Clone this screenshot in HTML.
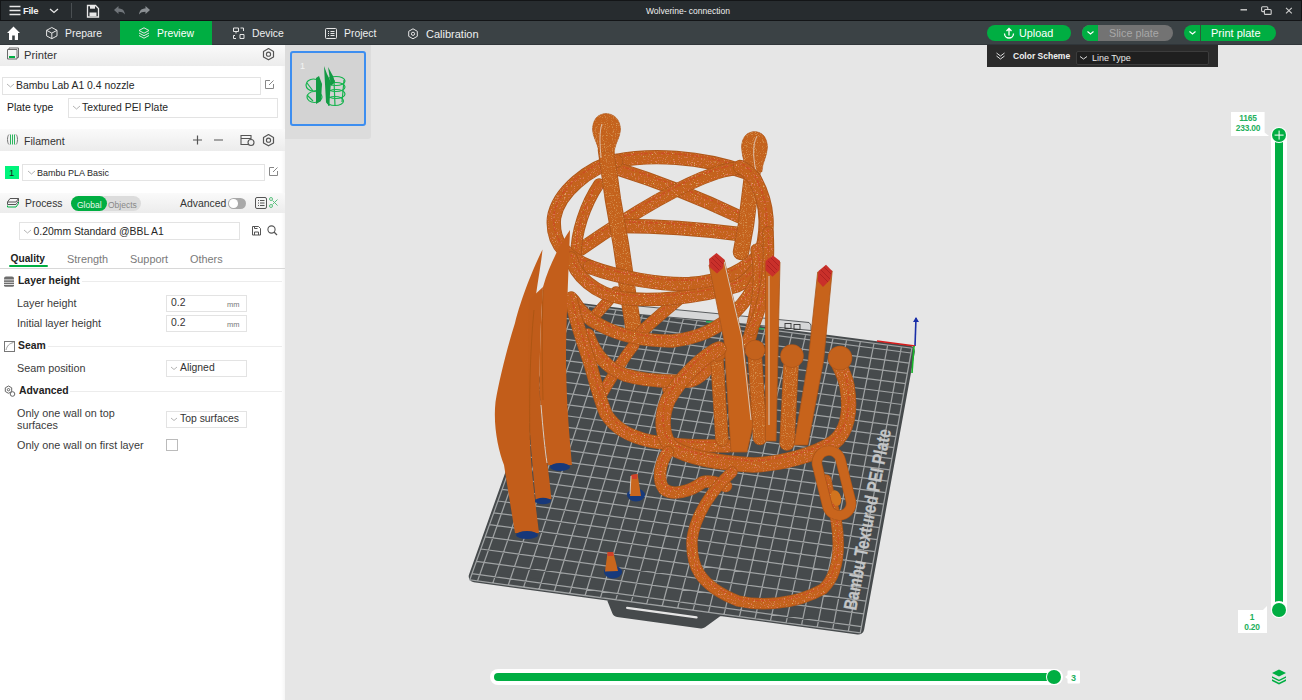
<!DOCTYPE html>
<html><head><meta charset="utf-8">
<style>
*{margin:0;padding:0;box-sizing:border-box}
html,body{width:1302px;height:700px;overflow:hidden;background:#e6e6e6;font-family:"Liberation Sans",sans-serif;position:relative}
.a{position:absolute}
.t{position:absolute;white-space:nowrap;line-height:12px}
#title{left:0;top:0;width:1302px;height:21px;background:#272c2f;border-top:1px solid #131517;border-bottom:1px solid #131517;border-left:1px solid #131517}
#tabs{left:0;top:21px;width:1302px;height:24px;background:#3b4245;border-bottom:1px solid #30363a}
#left{left:0;top:45px;width:285px;height:655px;background:#fff}
.hdr{position:absolute;left:0;width:285px;background:linear-gradient(#fafafa,#ececec)}
.box{position:absolute;border:1px solid #e3e3e3;background:#fff}
.l{position:absolute;white-space:nowrap;font-size:10.4px;color:#262626;line-height:14px}
.tab{font-size:10.4px;color:#eef0f0}
svg{position:absolute;overflow:visible}
</style></head><body>
<svg id="scene" style="left:0;top:0" width="1302" height="700">
<defs><filter id="spk" filterUnits="userSpaceOnUse" x="0" y="0" width="1302" height="700"><feTurbulence type="fractalNoise" baseFrequency="0.7" numOctaves="1" seed="4" result="t"/><feColorMatrix in="t" type="matrix" values="0 0 0 0 0.80  0 0 0 0 0.20  0 0 0 0 0.12  0 0 0 6 -3.6" result="r"/><feTurbulence type="fractalNoise" baseFrequency="0.9" numOctaves="1" seed="9" result="t2"/><feColorMatrix in="t2" type="matrix" values="0 0 0 0 0.78  0 0 0 0 0.62  0 0 0 0 0.22  0 0 0 5 -3.3" result="y"/><feMerge result="m"><feMergeNode in="SourceGraphic"/><feMergeNode in="r"/><feMergeNode in="y"/></feMerge><feComposite in="m" in2="SourceAlpha" operator="in"/></filter><filter id="tex" filterUnits="userSpaceOnUse" x="0" y="0" width="1302" height="700"><feTurbulence type="fractalNoise" baseFrequency="0.9" numOctaves="1" seed="2" result="t"/><feColorMatrix in="t" type="matrix" values="0 0 0 0 0.70  0 0 0 0 0.33  0 0 0 0 0.09  0 0 0 4 -2.2" result="r"/><feMerge result="m"><feMergeNode in="SourceGraphic"/><feMergeNode in="r"/></feMerge><feComposite in="m" in2="SourceAlpha" operator="in"/></filter></defs>
<polygon points="570.4,307.6 908.8,351.4 858.2,628.6 719.0,609.7 701.5,622.5 617.9,611.1 611.5,595.0 474.7,576.4" fill="#464a4c" stroke="#464a4c" stroke-width="12" stroke-linejoin="round"/>
<path d="M575.5,304.6L477.6,580.8 M588.9,306.4L492.9,582.9 M602.4,308.1L508.3,585.0 M615.9,309.9L523.6,587.1 M629.4,311.6L539.0,589.2 M642.9,313.4L554.3,591.3 M656.5,315.1L569.7,593.4 M670.0,316.9L585.1,595.5 M683.5,318.6L600.5,597.6 M697.1,320.4L615.9,599.7 M710.7,322.1L631.3,601.8 M724.2,323.9L646.7,603.9 M737.8,325.6L662.2,606.0 M751.4,327.4L677.6,608.1 M765.0,329.2L693.1,610.2 M778.6,330.9L708.5,612.3 M792.2,332.7L724.0,614.4 M805.8,334.4L739.5,616.5 M819.4,336.2L755.0,618.6 M833.1,338.0L770.5,620.7 M846.7,339.7L786.1,622.8 M860.4,341.5L801.6,624.9 M874.0,343.3L817.2,627.1 M887.7,345.0L832.7,629.2 M901.4,346.8L848.3,631.3 M566.9,308.4L911.0,353.0 M563.4,318.2L909.2,363.1 M559.8,328.1L907.4,373.3 M556.2,338.1L905.5,383.6 M552.6,348.2L903.6,394.0 M549.0,358.4L901.7,404.5 M545.3,368.7L899.8,415.2 M541.6,379.1L897.8,425.9 M537.8,389.7L895.9,436.7 M534.0,400.3L893.9,447.7 M530.2,411.0L891.9,458.7 M526.3,421.9L889.8,469.9 M522.4,432.8L887.8,481.2 M518.4,443.9L885.7,492.7 M514.4,455.1L883.6,504.2 M510.4,466.4L881.5,515.9 M506.3,477.8L879.4,527.6 M502.1,489.3L877.2,539.6 M498.0,501.0L875.0,551.6 M493.7,512.8L872.8,563.8 M489.5,524.7L870.6,576.1 M485.2,536.8L868.3,588.5 M480.8,549.0L866.0,601.1 M476.4,561.3L863.7,613.8 M471.9,573.7L861.4,626.7 M568.5,303.7L911.9,348.2L860.3,632.9L469.8,579.8Z" stroke="#9fa2a3" stroke-width="1.25" fill="none"/>
<path d="M627.1,607.9L696.6,617.4" stroke="#e6e6e6" stroke-width="2.2" stroke-linecap="round"/>
<polygon points="628,305 809,322.5 811,325 811,330.5 719,321.5 628,313.5" fill="#d6d7d8" stroke="#4a4d4f" stroke-width="0.9"/>
<path d="M706,321.5 L719,323" stroke="#1fae55" stroke-width="1.6"/><path d="M755,328 L764,329" stroke="#1fae55" stroke-width="1.6"/>
<rect x="785" y="323.5" width="6" height="5" fill="none" stroke="#333" stroke-width="0.9"/><rect x="794" y="324.5" width="6" height="5" fill="none" stroke="#333" stroke-width="0.9"/>
<text x="0" y="0" transform="translate(856,611) rotate(-79)" font-family="Liberation Sans" font-weight="bold" font-size="18.5" fill="#c4c6c7" stroke="#c4c6c7" stroke-width="0.3" textLength="184" lengthAdjust="spacingAndGlyphs">Bambu Textured PEI Plate</text>
<path d="M616,161 C650,154 700,156 745,172" fill="none" stroke="#ad561a" stroke-width="14.4" stroke-linecap="round" stroke-linejoin="round"/>
<path d="M616,161 C650,154 700,156 745,172" fill="none" stroke="#c4621c" stroke-width="13" stroke-linecap="round" stroke-linejoin="round" filter="url(#spk)"/>
<path d="M616,161 C650,154 700,156 745,172" transform="translate(0,-3.9)" fill="none" stroke="#cf3f25" stroke-width="1.6" stroke-dasharray="3 1.5 1 2.5 2 1 4 2" opacity="0.6"/>
<path d="M615,168 C660,182 700,198 740,217" fill="none" stroke="#ad561a" stroke-width="13.4" stroke-linecap="round" stroke-linejoin="round"/>
<path d="M615,168 C660,182 700,198 740,217" fill="none" stroke="#c4621c" stroke-width="12" stroke-linecap="round" stroke-linejoin="round" filter="url(#spk)"/>
<path d="M615,168 C660,182 700,198 740,217" transform="translate(0,-3.6)" fill="none" stroke="#cf3f25" stroke-width="1.4" stroke-dasharray="3 1.5 1 2.5 2 1 4 2" opacity="0.6"/>
<path d="M581,249 C630,215 680,185 716,173 C725,170 735,168 745,168" fill="none" stroke="#ad561a" stroke-width="13.4" stroke-linecap="round" stroke-linejoin="round"/>
<path d="M581,249 C630,215 680,185 716,173 C725,170 735,168 745,168" fill="none" stroke="#c4621c" stroke-width="12" stroke-linecap="round" stroke-linejoin="round" filter="url(#spk)"/>
<path d="M581,249 C630,215 680,185 716,173 C725,170 735,168 745,168" transform="translate(0,-3.6)" fill="none" stroke="#cf3f25" stroke-width="1.4" stroke-dasharray="3 1.5 1 2.5 2 1 4 2" opacity="0.6"/>
<path d="M621,226 C660,226 700,229 739,234" fill="none" stroke="#ad561a" stroke-width="14.4" stroke-linecap="round" stroke-linejoin="round"/>
<path d="M621,226 C660,226 700,229 739,234" fill="none" stroke="#c4621c" stroke-width="13" stroke-linecap="round" stroke-linejoin="round" filter="url(#spk)"/>
<path d="M621,226 C660,226 700,229 739,234" transform="translate(0,-3.9)" fill="none" stroke="#cf3f25" stroke-width="1.6" stroke-dasharray="3 1.5 1 2.5 2 1 4 2" opacity="0.6"/>
<path d="M599,184 C585,205 576,232 576,255" fill="none" stroke="#ad561a" stroke-width="11.4" stroke-linecap="round" stroke-linejoin="round"/>
<path d="M599,184 C585,205 576,232 576,255" fill="none" stroke="#c4621c" stroke-width="10" stroke-linecap="round" stroke-linejoin="round" filter="url(#spk)"/>
<path d="M599,184 C585,205 576,232 576,255" transform="translate(0,-3.0)" fill="none" stroke="#cf3f25" stroke-width="1.2" stroke-dasharray="3 1.5 1 2.5 2 1 4 2" opacity="0.6"/>
<path d="M755,178 C767,205 768,235 757,262" fill="none" stroke="#ad561a" stroke-width="12.4" stroke-linecap="round" stroke-linejoin="round"/>
<path d="M755,178 C767,205 768,235 757,262" fill="none" stroke="#c4621c" stroke-width="11" stroke-linecap="round" stroke-linejoin="round" filter="url(#spk)"/>
<path d="M755,178 C767,205 768,235 757,262" transform="translate(0,-3.3)" fill="none" stroke="#cf3f25" stroke-width="1.3" stroke-dasharray="3 1.5 1 2.5 2 1 4 2" opacity="0.6"/>
<path d="M616,161 C590,167 558,192 554,218 C552,240 562,256 590,267" fill="none" stroke="#ad561a" stroke-width="14.4" stroke-linecap="round" stroke-linejoin="round"/>
<path d="M616,161 C590,167 558,192 554,218 C552,240 562,256 590,267" fill="none" stroke="#c4621c" stroke-width="13" stroke-linecap="round" stroke-linejoin="round" filter="url(#spk)"/>
<path d="M616,161 C590,167 558,192 554,218 C552,240 562,256 590,267" transform="translate(0,-3.9)" fill="none" stroke="#cf3f25" stroke-width="1.6" stroke-dasharray="3 1.5 1 2.5 2 1 4 2" opacity="0.6"/>
<path d="M606,150 L613,200 L621,245 L629,300 L634,332" fill="none" stroke="#ad561a" stroke-width="16.4" stroke-linecap="round" stroke-linejoin="round"/>
<path d="M606,150 L613,200 L621,245 L629,300 L634,332" fill="none" stroke="#c4621c" stroke-width="15" stroke-linecap="round" stroke-linejoin="round" filter="url(#tex)"/>
<path d="M606,113.5 C614.5,113.5 620.5,120 620.5,129 C620.5,138 615,143 614.5,152 L598.5,152 C598,143 592.5,138 592.5,129 C592.5,120 597.5,113.5 606,113.5 Z" fill="#c4621c" stroke="#ad561a" stroke-width="0.8" filter="url(#tex)"/>
<path d="M602,124 C599,132 600,145 601,158" stroke="#e2d6cc" stroke-width="0.8" fill="none"/>
<path d="M753,168 L746,225 L741,252" fill="none" stroke="#ad561a" stroke-width="16.4" stroke-linecap="round" stroke-linejoin="round"/>
<path d="M753,168 L746,225 L741,252" fill="none" stroke="#c4621c" stroke-width="15" stroke-linecap="round" stroke-linejoin="round" filter="url(#tex)"/>
<path d="M754.5,131.5 C762.5,131.5 767.5,138 767.5,147 C767.5,156 762.5,162 762,172 L745,172 C745,162 741.5,156 741.5,147 C741.5,138 746.5,131.5 754.5,131.5 Z" fill="#c4621c" stroke="#ad561a" stroke-width="0.8" filter="url(#tex)"/>
<path d="M757,136 C752,145 753,160 757,175" stroke="#e2d6cc" stroke-width="0.8" fill="none"/>
<path d="M593,318 L616,292" fill="none" stroke="#ad561a" stroke-width="11.4" stroke-linecap="round" stroke-linejoin="round"/>
<path d="M593,318 L616,292" fill="none" stroke="#c4621c" stroke-width="10" stroke-linecap="round" stroke-linejoin="round" filter="url(#spk)"/>
<path d="M593,318 L616,292" transform="translate(0,-3.0)" fill="none" stroke="#cf3f25" stroke-width="1.2" stroke-dasharray="3 1.5 1 2.5 2 1 4 2" opacity="0.6"/>
<path d="M641,332 C660,315 675,302 690,290" fill="none" stroke="#ad561a" stroke-width="12.4" stroke-linecap="round" stroke-linejoin="round"/>
<path d="M641,332 C660,315 675,302 690,290" fill="none" stroke="#c4621c" stroke-width="11" stroke-linecap="round" stroke-linejoin="round" filter="url(#spk)"/>
<path d="M641,332 C660,315 675,302 690,290" transform="translate(0,-3.3)" fill="none" stroke="#cf3f25" stroke-width="1.3" stroke-dasharray="3 1.5 1 2.5 2 1 4 2" opacity="0.6"/>
<path d="M600,397 C610,380 622,360 634,345" fill="none" stroke="#ad561a" stroke-width="11.4" stroke-linecap="round" stroke-linejoin="round"/>
<path d="M600,397 C610,380 622,360 634,345" fill="none" stroke="#c4621c" stroke-width="10" stroke-linecap="round" stroke-linejoin="round" filter="url(#spk)"/>
<path d="M600,397 C610,380 622,360 634,345" transform="translate(0,-3.0)" fill="none" stroke="#cf3f25" stroke-width="1.2" stroke-dasharray="3 1.5 1 2.5 2 1 4 2" opacity="0.6"/>
<path d="M668,389 C678,380 690,372 702,366" fill="none" stroke="#ad561a" stroke-width="11.4" stroke-linecap="round" stroke-linejoin="round"/>
<path d="M668,389 C678,380 690,372 702,366" fill="none" stroke="#c4621c" stroke-width="10" stroke-linecap="round" stroke-linejoin="round" filter="url(#spk)"/>
<path d="M668,389 C678,380 690,372 702,366" transform="translate(0,-3.0)" fill="none" stroke="#cf3f25" stroke-width="1.2" stroke-dasharray="3 1.5 1 2.5 2 1 4 2" opacity="0.6"/>
<path d="M590,267 C620,278 660,285 690,284 C720,282 745,272 762,252 C769,232 769,205 755,180 C750,173 745,169 740,167" fill="none" stroke="#ad561a" stroke-width="14.4" stroke-linecap="round" stroke-linejoin="round"/>
<path d="M590,267 C620,278 660,285 690,284 C720,282 745,272 762,252 C769,232 769,205 755,180 C750,173 745,169 740,167" fill="none" stroke="#c4621c" stroke-width="13" stroke-linecap="round" stroke-linejoin="round" filter="url(#spk)"/>
<path d="M590,267 C620,278 660,285 690,284 C720,282 745,272 762,252 C769,232 769,205 755,180 C750,173 745,169 740,167" transform="translate(0,-3.9)" fill="none" stroke="#cf3f25" stroke-width="1.6" stroke-dasharray="3 1.5 1 2.5 2 1 4 2" opacity="0.6"/>
<path d="M571,258 C575,275 595,294 622,298 C650,302 700,298 737,286 C748,281 755,272 762,260" fill="none" stroke="#ad561a" stroke-width="13.4" stroke-linecap="round" stroke-linejoin="round"/>
<path d="M571,258 C575,275 595,294 622,298 C650,302 700,298 737,286 C748,281 755,272 762,260" fill="none" stroke="#c4621c" stroke-width="12" stroke-linecap="round" stroke-linejoin="round" filter="url(#spk)"/>
<path d="M571,258 C575,275 595,294 622,298 C650,302 700,298 737,286 C748,281 755,272 762,260" transform="translate(0,-3.6)" fill="none" stroke="#cf3f25" stroke-width="1.4" stroke-dasharray="3 1.5 1 2.5 2 1 4 2" opacity="0.6"/>
<path d="M573,300 C580,312 590,320 600,325 C620,336 645,341 672,341 C700,338 720,328 735,312 C745,302 752,292 757,280" fill="none" stroke="#ad561a" stroke-width="13.4" stroke-linecap="round" stroke-linejoin="round"/>
<path d="M573,300 C580,312 590,320 600,325 C620,336 645,341 672,341 C700,338 720,328 735,312 C745,302 752,292 757,280" fill="none" stroke="#c4621c" stroke-width="12" stroke-linecap="round" stroke-linejoin="round" filter="url(#spk)"/>
<path d="M573,300 C580,312 590,320 600,325 C620,336 645,341 672,341 C700,338 720,328 735,312 C745,302 752,292 757,280" transform="translate(0,-3.6)" fill="none" stroke="#cf3f25" stroke-width="1.4" stroke-dasharray="3 1.5 1 2.5 2 1 4 2" opacity="0.6"/>
<path d="M588,335 C594,352 606,368 625,375 C645,381 665,382 690,381 C702,378 712,365 721,350" fill="none" stroke="#ad561a" stroke-width="13.4" stroke-linecap="round" stroke-linejoin="round"/>
<path d="M588,335 C594,352 606,368 625,375 C645,381 665,382 690,381 C702,378 712,365 721,350" fill="none" stroke="#c4621c" stroke-width="12" stroke-linecap="round" stroke-linejoin="round" filter="url(#spk)"/>
<path d="M588,335 C594,352 606,368 625,375 C645,381 665,382 690,381 C702,378 712,365 721,350" transform="translate(0,-3.6)" fill="none" stroke="#cf3f25" stroke-width="1.4" stroke-dasharray="3 1.5 1 2.5 2 1 4 2" opacity="0.6"/>
<path d="M757,250 C762,275 760,305 748,343" fill="none" stroke="#ad561a" stroke-width="13.4" stroke-linecap="round" stroke-linejoin="round"/>
<path d="M757,250 C762,275 760,305 748,343" fill="none" stroke="#c4621c" stroke-width="12" stroke-linecap="round" stroke-linejoin="round" filter="url(#spk)"/>
<path d="M757,250 C762,275 760,305 748,343" transform="translate(0,-3.6)" fill="none" stroke="#cf3f25" stroke-width="1.4" stroke-dasharray="3 1.5 1 2.5 2 1 4 2" opacity="0.6"/>
<path d="M768,232 C770,265 766,300 752,330" fill="none" stroke="#ad561a" stroke-width="11.4" stroke-linecap="round" stroke-linejoin="round"/>
<path d="M768,232 C770,265 766,300 752,330" fill="none" stroke="#c4621c" stroke-width="10" stroke-linecap="round" stroke-linejoin="round" filter="url(#spk)"/>
<path d="M768,232 C770,265 766,300 752,330" transform="translate(0,-3.0)" fill="none" stroke="#cf3f25" stroke-width="1.2" stroke-dasharray="3 1.5 1 2.5 2 1 4 2" opacity="0.6"/>
<path d="M571,298 C575,320 584,345 590,363 C596,385 601,402 606,414 C615,428 628,436 650,441 C675,446 700,446 728,446" fill="none" stroke="#ad561a" stroke-width="13.4" stroke-linecap="round" stroke-linejoin="round"/>
<path d="M571,298 C575,320 584,345 590,363 C596,385 601,402 606,414 C615,428 628,436 650,441 C675,446 700,446 728,446" fill="none" stroke="#c4621c" stroke-width="12" stroke-linecap="round" stroke-linejoin="round" filter="url(#spk)"/>
<path d="M571,298 C575,320 584,345 590,363 C596,385 601,402 606,414 C615,428 628,436 650,441 C675,446 700,446 728,446" transform="translate(0,-3.6)" fill="none" stroke="#cf3f25" stroke-width="1.4" stroke-dasharray="3 1.5 1 2.5 2 1 4 2" opacity="0.6"/>
<path d="M717,360 L722,440" fill="none" stroke="#ad561a" stroke-width="13.4" stroke-linecap="round" stroke-linejoin="round"/>
<path d="M717,360 L722,440" fill="none" stroke="#c4621c" stroke-width="12" stroke-linecap="round" stroke-linejoin="round" filter="url(#tex)"/>
<circle cx="717" cy="352" r="9.8" fill="#ad561a"/><circle cx="717" cy="352" r="9" fill="#c4621c"/>
<path d="M755,358 L760,438" fill="none" stroke="#ad561a" stroke-width="14.4" stroke-linecap="round" stroke-linejoin="round"/>
<path d="M755,358 L760,438" fill="none" stroke="#c4621c" stroke-width="13" stroke-linecap="round" stroke-linejoin="round" filter="url(#tex)"/>
<circle cx="755" cy="350" r="10.3" fill="#ad561a"/><circle cx="755" cy="350" r="9.5" fill="#c4621c"/>
<path d="M791,366 L787,443" fill="none" stroke="#ad561a" stroke-width="15.4" stroke-linecap="round" stroke-linejoin="round"/>
<path d="M791,366 L787,443" fill="none" stroke="#c4621c" stroke-width="14" stroke-linecap="round" stroke-linejoin="round" filter="url(#tex)"/>
<circle cx="792" cy="356" r="11.8" fill="#ad561a"/><circle cx="792" cy="356" r="11" fill="#c4621c"/>
<polygon points="709,265 724.3,260 743,340 753,425 747,452 731,452 724,340" fill="#c7631b" stroke="#a9551a" stroke-width="0.8"/>
<path d="M724.3,262 L742,338 L751,420" stroke="#d9d0c6" stroke-width="0.9" fill="none"/>
<polygon points="716.5,253 724.3,259.5 723,268 717,273.4 709.5,267 709,259" fill="#c9302a"/>
<path d="M711,262l8,8 M712,258l9,9 M715,256l8,8" stroke="#a82020" stroke-width="0.8"/>
<polygon points="765.4,263 780,262 776,441 765.5,441" fill="#c7631b" stroke="#a9551a" stroke-width="0.8"/>
<path d="M769,276 L769,425" stroke="#ddd2c6" stroke-width="1"/>
<polygon points="773,255.4 780,261 779.5,270 772.5,276.8 765.5,270.5 765.5,261" fill="#c9302a"/>
<path d="M767,265l8,8 M768,261l9,9 M771,258l8,8" stroke="#a82020" stroke-width="0.8"/>
<polygon points="817.7,272 832.2,271 823.7,360 807.8,445 794,445 808.3,360" fill="#c7631b" stroke="#a9551a" stroke-width="0.8"/>
<polygon points="826,264.8 832.2,271 830,280 823,287 817.7,281 818.5,271" fill="#c9302a"/>
<path d="M820,274l8,8 M821,270l9,9 M824,267l7,7" stroke="#a82020" stroke-width="0.8"/>
<path d="M719,349 C705,355 680,378 668,400 C660,418 662,440 673,448 C690,458 720,463 753,465 C780,464 815,455 833,443 C848,432 851,410 847,386 C845,375 840,368 838,362" fill="none" stroke="#ad561a" stroke-width="15.4" stroke-linecap="round" stroke-linejoin="round"/>
<path d="M719,349 C705,355 680,378 668,400 C660,418 662,440 673,448 C690,458 720,463 753,465 C780,464 815,455 833,443 C848,432 851,410 847,386 C845,375 840,368 838,362" fill="none" stroke="#c4621c" stroke-width="14" stroke-linecap="round" stroke-linejoin="round" filter="url(#spk)"/>
<path d="M719,349 C705,355 680,378 668,400 C660,418 662,440 673,448 C690,458 720,463 753,465 C780,464 815,455 833,443 C848,432 851,410 847,386 C845,375 840,368 838,362" transform="translate(0,-4.2)" fill="none" stroke="#cf3f25" stroke-width="1.7" stroke-dasharray="3 1.5 1 2.5 2 1 4 2" opacity="0.6"/>
<circle cx="840" cy="358" r="12.3" fill="#ad561a"/><circle cx="840" cy="358" r="11.5" fill="#c4621c"/>
<path d="M668,452 C660,462 657,480 664,489 C672,496 690,492 703,482 C712,480 720,484 726,486" fill="none" stroke="#ad561a" stroke-width="12.4" stroke-linecap="round" stroke-linejoin="round"/>
<path d="M668,452 C660,462 657,480 664,489 C672,496 690,492 703,482 C712,480 720,484 726,486" fill="none" stroke="#c4621c" stroke-width="11" stroke-linecap="round" stroke-linejoin="round" filter="url(#spk)"/>
<path d="M668,452 C660,462 657,480 664,489 C672,496 690,492 703,482 C712,480 720,484 726,486" transform="translate(0,-3.3)" fill="none" stroke="#cf3f25" stroke-width="1.3" stroke-dasharray="3 1.5 1 2.5 2 1 4 2" opacity="0.6"/>
<path d="M732,472 C712,490 695,515 692,540 C691,565 698,585 738,601 C760,606 795,605 823,589 C838,575 841,550 836,519 C833,505 828,495 826,480" fill="none" stroke="#ad561a" stroke-width="11.4" stroke-linecap="round" stroke-linejoin="round"/>
<path d="M732,472 C712,490 695,515 692,540 C691,565 698,585 738,601 C760,606 795,605 823,589 C838,575 841,550 836,519 C833,505 828,495 826,480" fill="none" stroke="#c4621c" stroke-width="10" stroke-linecap="round" stroke-linejoin="round" filter="url(#spk)"/>
<path d="M732,472 C712,490 695,515 692,540 C691,565 698,585 738,601 C760,606 795,605 823,589 C838,575 841,550 836,519 C833,505 828,495 826,480" transform="translate(0,-3.0)" fill="none" stroke="#cf3f25" stroke-width="1.2" stroke-dasharray="3 1.5 1 2.5 2 1 4 2" opacity="0.6"/>
<rect x="822" y="450" width="24" height="66" rx="12" transform="rotate(-14 834 483)" fill="none" stroke="#a9551a" stroke-width="10.4"/>
<rect x="822" y="450" width="24" height="66" rx="12" transform="rotate(-14 834 483)" fill="none" stroke="#c9651d" stroke-width="9"/>
<ellipse cx="836" cy="498" rx="5" ry="8" transform="rotate(-14 836 498)" fill="#d2741e"/>
<path d="M542.5,249.6 C536,262 522,295 515,323 C508,345 499,380 495.5,402 C493,425 498,450 504,465 C508,490 512,515 515,533 L539,533 C535,500 531,470 530,440 C529,400 530,350 534,310 C537,285 541,265 542.5,249.6 Z" fill="#c25d1a"/>
<path d="M529,300 L543,287 C540,330 539,380 540.4,404.6 C544,440 550,480 551.4,499 L535.6,499 C533,470 529,430 528.5,400 C528,360 528,330 529,300 Z" fill="#c05c1a"/>
<path d="M570,230 C563,240 550,262 543,287 C540,330 539,380 540.4,404.6 C543,430 546,450 547.7,465 L572,465 C569,430 566,400 566,350 C567,300 569,260 570,230 Z" fill="#c35e1b"/>
<path d="M530,440 C529,400 530,350 534,310 M543,400 C542,360 542,330 543,290" stroke="#a85412" stroke-width="0.8" fill="none"/>
<path d="M541,405 C543,430 545,450 547,463" stroke="#e0d8d0" stroke-width="0.9" fill="none"/>
<ellipse cx="527" cy="535" rx="11" ry="4" fill="#17387a"/>
<ellipse cx="543" cy="501" rx="8" ry="3.2" fill="#17387a"/>
<ellipse cx="560" cy="467" rx="10" ry="4" fill="#17387a"/>
<ellipse cx="636" cy="495" rx="9" ry="6.5" fill="#173a7c"/>
<polygon points="631,475 637.5,474 641,496 630,496" fill="#c9661d"/>
<polygon points="631,475 637.5,474 637,479 632,479" fill="#d0402a"/>
<path d="M631,476 L630,494" stroke="#e8e0d8" stroke-width="0.8"/>
<ellipse cx="613" cy="572" rx="9" ry="6.5" fill="#173a7c"/>
<polygon points="607.6,552 613.2,552 618,571 605,571.5" fill="#c9661d"/>
<polygon points="607.6,552 613.2,552 613.5,556 607.5,556" fill="#d0402a"/>
<path d="M915,346 L916,318" stroke="#1a2fa8" stroke-width="1.6"/><path d="M913,322 L916,317 L919,322z" fill="#1a2fa8"/>
<path d="M915,346 L877,341" stroke="#d81c1c" stroke-width="1.6"/>
<path d="M914,346 L912,373" stroke="#17b52a" stroke-width="1.6"/>
</svg>
<!-- title bar -->
<div id="title" class="a"></div>
<svg style="left:0;top:0" width="1302" height="21">
 <g stroke="#e8e8e8" stroke-width="1.3" fill="none">
  <path d="M9.5 6.5h11M9.5 10.5h11M9.5 14.5h11"/>
  <path d="M50 9l4 3.5 4-3.5"/>
 </g>
 <path d="M71.5 3v15" stroke="#4a4f52"/>
 <path d="M87.5 5.5h8l3 3v8.5h-11z" fill="none" stroke="#e8e8e8" stroke-width="1.3"/>
 <rect x="90" y="5.5" width="5" height="3.2" fill="#e8e8e8"/>
 <rect x="89.5" y="12.5" width="7" height="3.6" fill="#e8e8e8"/>
 <path d="M114 10l4.5-4v2.5c4 0 6 2 6.5 6-1.5-2-3.5-2.7-6.5-2.7V14z" fill="#70757a"/>
 <path d="M150 10l-4.5-4v2.5c-4 0-6 2-6.5 6 1.5-2 3.5-2.7 6.5-2.7V14z" fill="#8a8f93"/>
 <g stroke="#d0d0d0" stroke-width="1.1" fill="none">
  <path d="M1240.5 9.8h6.5" stroke-width="1.4"/>
  <rect x="1261.6" y="6.8" width="6.2" height="4.8" rx="1"/>
  <rect x="1264.4" y="9.5" width="6.8" height="4.9" rx="1" fill="#272c2f"/>
  <path d="M1286 7.8l5.8 5.6M1291.8 7.8l-5.8 5.6"/>
 </g>
 <path d="M1301.5 0v21" stroke="#131517"/>
</svg>
<div class="t" style="left:23px;top:4.5px;font-size:9.5px;color:#f0f0f0;font-weight:bold;letter-spacing:-0.3px">File</div>
<div class="t" style="left:646px;top:5px;font-size:8.5px;color:#f0f0f0">Wolverine- connection</div>
<!-- tab bar -->
<div id="tabs" class="a"></div>
<div class="a" style="left:120px;top:21px;width:92px;height:24px;background:#00ae42"></div>
<svg style="left:0;top:21px" width="1302" height="24">
 <path d="M7 12L13.5 5.5 20 12h-2v7h-3.2v-4.5h-2.6V19H9v-7z" fill="#fff"/>
 <g fill="none" stroke="#e6e6e6" stroke-width="1">
  <path d="M51.8 6.5l5.2 2.8v5.6l-5.2 2.8-5.2-2.8V9.3z M46.6 9.3l5.2 2.8 5.2-2.8 M51.8 12.1v5.6"/>
  <path d="M139 9.5l5-2.7 5 2.7-5 2.7z M139 12l5 2.7 5-2.7 M139 14.5l5 2.7 5-2.7"/>
  <path d="M233.5 7h5v3.5h-5z M236 10.5v2 M235 14.5h-1.5v3h2.5 M240.5 7h3v3 M240 13.5h4v4h-4z"/>
  <rect x="325.5" y="7.5" width="11" height="10" rx="1"/>
  <path d="M328 10.5h1 M330.5 10.5h4 M328 12.5h1 M330.5 12.5h4 M328 14.5h1 M330.5 14.5h4"/>
  <path d="M413 7.8l4.3 2.5v5l-4.3 2.5-4.3-2.5v-5z"/>
  <circle cx="413" cy="12.8" r="1.6"/>
 </g>
</svg>
<div class="t tab" style="left:65px;top:28px">Prepare</div>
<div class="t tab" style="left:157px;top:28px;color:#fff">Preview</div>
<div class="t tab" style="left:252px;top:28px">Device</div>
<div class="t tab" style="left:344px;top:28px">Project</div>
<div class="t tab" style="left:426px;top:28px;font-size:11px">Calibration</div>
<!-- buttons -->
<div class="a" style="left:987px;top:25px;width:84px;height:16px;border-radius:8px;background:#00ae42"></div>
<svg style="left:1003px;top:27px" width="14" height="13"><path d="M1.5 6.5a4.5 4.5 0 0 0 9 0 M6 1.5v7 M3.5 4l2.5-2.5 2.5 2.5" fill="none" stroke="#fff" stroke-width="1.3"/></svg>
<div class="t" style="left:1019px;top:27px;font-size:10.8px;color:#fff">Upload</div>
<div class="a" style="left:1082px;top:25px;width:91px;height:16px;border-radius:8px;background:#737373;overflow:hidden"><div class="a" style="left:0;top:0;width:16px;height:16px;background:#00ae42"></div></div>
<svg style="left:1086px;top:30px" width="10" height="6"><path d="M1.5 1.5l3 2.5 3-2.5" fill="none" stroke="#fff" stroke-width="1.1"/></svg>
<div class="t" style="left:1109px;top:27px;font-size:10.8px;color:#a8a8a8">Slice plate</div>
<div class="a" style="left:1184px;top:25px;width:92px;height:16px;border-radius:8px;background:#00ae42;overflow:hidden"><div class="a" style="left:16px;top:0;width:1px;height:16px;background:#2d5a3a"></div></div>
<svg style="left:1188px;top:30px" width="10" height="6"><path d="M1.5 1.5l3 2.5 3-2.5" fill="none" stroke="#fff" stroke-width="1.1"/></svg>
<div class="t" style="left:1211px;top:27px;font-size:11px;color:#fff">Print plate</div>
<!-- color scheme -->
<div class="a" style="left:987px;top:45px;width:231px;height:22px;background:#2b2b2b"></div>
<svg style="left:995px;top:51px" width="12" height="10"><path d="M1.5 2l4 3 4-3 M1.5 5l4 3 4-3" fill="none" stroke="#ddd" stroke-width="1"/></svg>
<div class="t" style="left:1013px;top:50px;font-size:8.5px;color:#f0f0f0;font-weight:bold">Color Scheme</div>
<div class="a" style="left:1076px;top:51px;width:133px;height:14px;background:#1f1f1f;border:1px solid #3c3c3c;border-radius:2px"></div>
<svg style="left:1079px;top:55px" width="10" height="6"><path d="M1 1.5l3.5 2.5 3.5-2.5" fill="none" stroke="#ddd" stroke-width="1"/></svg>
<div class="t" style="left:1092px;top:52px;font-size:9px;color:#e8e8e8">Line Type</div>


<!-- plate thumbnail -->
<div class="a" style="left:285px;top:45px;width:86px;height:94px;background:#dcdcdc;border-radius:0 0 3px 0"></div>
<div class="a" style="left:290px;top:50.5px;width:75.5px;height:75.5px;background:#d3d3d3;border:2px solid #3d8ef0;border-radius:3px"></div>
<div class="t" style="left:300px;top:60px;font-size:9px;color:#f4f4f4">1</div>
<svg style="left:290px;top:50px" width="76" height="76">
 <g fill="none" stroke="#16b44e" stroke-width="1.2">
  <ellipse cx="23.5" cy="35" rx="7.5" ry="6"/><ellipse cx="24.5" cy="47" rx="7.5" ry="5.5"/>
  <path d="M17 33l6 8 M17 45l6 6"/>
  <ellipse cx="46" cy="31" rx="9" ry="4.5"/><ellipse cx="46" cy="37" rx="9" ry="4.5"/><ellipse cx="46" cy="44" rx="9" ry="4.5"/><ellipse cx="45" cy="51" rx="8.5" ry="4.5"/>
  <path d="M38 30l1 26 M54 30l-2 22 M44 30l1 26"/>
 </g>
 <g fill="#139a44"><path d="M26 28l3-2 3 8-1 17-5 3z"/><path d="M34 16l3 8 4 8-2 24-3-4z"/><path d="M38 17l5 9 2 6-4 4z"/></g>
</svg>
<!-- vertical slider -->
<div class="a" style="left:1271px;top:128px;width:16px;height:490px;border-radius:8px;background:#fff"></div>
<div class="a" style="left:1275px;top:140px;width:8px;height:468px;background:#00ae42"></div>
<div class="a" style="left:1270.8px;top:126.8px;width:16.6px;height:16.6px;border-radius:50%;background:#fff"></div>
<div class="a" style="left:1272.2px;top:128.2px;width:13.8px;height:13.8px;border-radius:50%;background:#00ae42"></div>
<svg style="left:1272px;top:128px" width="14" height="14"><path d="M7.1 2.6v9 M2.6 7.1h9" stroke="#fff" stroke-width="1"/></svg>
<div class="a" style="left:1270.8px;top:601.4px;width:16.6px;height:16.6px;border-radius:50%;background:#fff"></div>
<div class="a" style="left:1272.2px;top:602.8px;width:13.8px;height:13.8px;border-radius:50%;background:#00ae42"></div>
<svg style="left:1230px;top:110px" width="45" height="30"><path d="M1 2h33.6v20.5l4.5 3.5h-38.1z" fill="#fff"/></svg>
<div class="t" style="left:1231px;top:113px;width:34px;text-align:center;font-size:8.4px;line-height:10px;color:#22b05c;font-weight:bold;letter-spacing:-0.2px">1165<br>233.00</div>
<svg style="left:1236px;top:606px" width="40" height="30"><path d="M2 4h25l4-4v27h-29z" fill="#fff"/></svg>
<div class="t" style="left:1238px;top:612px;width:28px;text-align:center;font-size:8.4px;line-height:10px;color:#22b05c;font-weight:bold;letter-spacing:-0.2px">1<br>0.20</div>
<svg style="left:1270px;top:668px" width="18" height="18">
 <g fill="#00ae42"><path d="M9 1.5l7 3.5-7 3.5-7-3.5z"/><path d="M2 8.2l7 3.5 7-3.5v1.6l-7 3.5-7-3.5z"/><path d="M2 11.3l7 3.5 7-3.5v1.6l-7 3.5-7-3.5z"/></g>
</svg>
<!-- horizontal slider -->
<div class="a" style="left:490px;top:669px;width:573px;height:16px;border-radius:8px;background:#fff"></div>
<div class="a" style="left:494px;top:673px;width:560px;height:8px;border-radius:4px;background:#00ae42"></div>
<div class="a" style="left:1045.7px;top:668.7px;width:16.6px;height:16.6px;border-radius:50%;background:#fff"></div>
<div class="a" style="left:1047.1px;top:670.1px;width:13.8px;height:13.8px;border-radius:50%;background:#00ae42"></div>
<svg style="left:1062px;top:670px" width="20" height="15"><path d="M5.5 1.5q0-1 1-1h10.5q1 0 1 1v11q0 1-1 1h-10.5q-1 0-1-1v-3.5l-2.5-2 2.5-2z" fill="#fff"/></svg>
<div class="t" style="left:1067.5px;top:671.5px;width:12px;text-align:center;font-size:9px;color:#22b05c;font-weight:bold">3</div>
<!-- left panel -->
<div id="left" class="a"></div>
<div class="a" style="left:281px;top:66px;width:4px;height:634px;background:linear-gradient(90deg,rgba(0,0,0,0),rgba(0,0,0,0.035))"></div>
<div class="hdr" style="top:45px;height:21px"></div>
<div class="hdr" style="top:129px;height:22px"></div>
<div class="hdr" style="top:193px;height:20px"></div>

<!-- printer -->
<svg style="left:0;top:45px" width="285" height="400">
 <g fill="none" stroke="#6b6b6b" stroke-width="1">
  <path d="M7.5 4.5h9.5v9.5h-9.5z M9 4.5v-1.5h9.5v9.5h-1.5"/>
 </g>
 <path d="M9 11h6v2h-6z" fill="#00ae42"/>
 <g fill="none" stroke="#555" stroke-width="1.1">
  <path d="M268.5 3.6l5 2.8v5.6l-5 2.8-5-2.8V6.4z" stroke-linejoin="round" stroke-width="1.2"/><circle cx="268.5" cy="9.2" r="2.1"/>
 </g>
 <g fill="none" stroke="#888" stroke-width="1">
  <path d="M270 35.5h-4.5v8h8V39 M269 40l4.5-4.5"/>
 </g>
</svg>
<div class="l" style="left:24px;top:48px;font-size:11.2px;color:#333">Printer</div>
<div class="box" style="left:2px;top:76.5px;width:259px;height:18px"></div>
<svg style="left:6px;top:83px" width="10" height="6"><path d="M1 1l3.5 3 3.5-3" fill="none" stroke="#aaa" stroke-width="0.9"/></svg>
<div class="l" style="left:16px;top:79px">Bambu Lab A1 0.4 nozzle</div>
<div class="l" style="left:7px;top:101px;color:#1a1a1a">Plate type</div>
<div class="box" style="left:68px;top:97.5px;width:210px;height:20px"></div>
<svg style="left:72px;top:105px" width="10" height="6"><path d="M1 1l3.5 3 3.5-3" fill="none" stroke="#aaa" stroke-width="0.9"/></svg>
<div class="l" style="left:82px;top:101px">Textured PEI Plate</div>
<!-- filament -->
<svg style="left:0;top:129px" width="285" height="30">
 <g fill="none" stroke="#777" stroke-width="1"><path d="M9 5.5c-2 1.5-2 8.5 0 10 M16 5.5c2 1.5 2 8.5 0 10"/></g>
 <g fill="none" stroke="#2cb55e" stroke-width="1"><path d="M10.5 5.5v10 M12.5 5.5v10 M14.5 5.5v10"/></g>
 <g stroke="#555" stroke-width="1.2" fill="none"><path d="M193 11h9 M197.5 6.5v9 M214 11h9"/></g>
 <g fill="none" stroke="#555" stroke-width="1.1">
  <path d="M241 6.5h10v3h-10z M241 9.5v6h7"/><circle cx="251" cy="13.5" r="3"/>
  <path d="M268.5 5.6l5 2.8v5.6l-5 2.8-5-2.8V8.4z" stroke-linejoin="round" stroke-width="1.2"/><circle cx="268.5" cy="11.2" r="2.1"/>
 </g>
</svg>
<div class="l" style="left:24px;top:133.5px;color:#333;font-size:10.6px">Filament</div>
<div class="a" style="left:5px;top:165.5px;width:14px;height:13.5px;background:#00f47c"></div>
<div class="l" style="left:9px;top:165.5px;font-size:9.5px;color:#1a1a1a">1</div>
<div class="box" style="left:22px;top:163.5px;width:243px;height:17.5px"></div>
<svg style="left:27px;top:170px" width="10" height="6"><path d="M1 1l3.5 3 3.5-3" fill="none" stroke="#aaa" stroke-width="0.9"/></svg>
<div class="l" style="left:37px;top:166px;font-size:9px">Bambu PLA Basic</div>
<svg style="left:0;top:160px" width="285" height="30"><path d="M274 7.5h-4.5v8h8V11 M273 12l4.5-4.5" fill="none" stroke="#888" stroke-width="1"/></svg>
<!-- process -->
<svg style="left:0;top:193px" width="285" height="22">
 <g fill="none" stroke="#555" stroke-width="1"><path d="M10 5.5h8.5l-2.5 3.5h-8.5z M7.5 9v2.5h8.5l2.5-3.5v-2.5"/></g>
 <path d="M7.5 12.5v1.5h8.5l2.5-3.5v-1.5" fill="none" stroke="#00ae42" stroke-width="1"/>
 <rect x="255.5" y="4.5" width="11" height="11" rx="1.5" fill="none" stroke="#555" stroke-width="1"/>
 <path d="M258 7.5h1 M260 7.5h4.5 M258 10h1 M260 10h4.5 M258 12.5h1 M260 12.5h4.5" stroke="#555" stroke-width="1"/>
 <g fill="none" stroke="#5cc27f" stroke-width="1"><circle cx="271" cy="6" r="1.5"/><circle cx="271" cy="13" r="1.5"/><path d="M272.5 7.5l5 5 M272.5 11.5l5-5"/></g>
</svg>
<div class="l" style="left:25px;top:197px;color:#333">Process</div>
<div class="a" style="left:71px;top:196px;width:70px;height:14.5px;border-radius:7.5px;background:#dcdcdc"></div>
<div class="a" style="left:71px;top:196px;width:36px;height:14.5px;border-radius:7.5px;background:#00ae42"></div>
<div class="l" style="left:77px;top:198px;font-size:8.5px;color:#e8f7ee">Global</div>
<div class="l" style="left:108px;top:198px;font-size:8.5px;color:#888">Objects</div>
<div class="l" style="left:180px;top:197px;color:#333">Advanced</div>
<div class="a" style="left:228px;top:198px;width:18px;height:10.5px;border-radius:5.5px;background:#a9a9a9"></div>
<div class="a" style="left:229px;top:199px;width:8.5px;height:8.5px;border-radius:50%;background:#fff"></div>
<div class="box" style="left:19px;top:222px;width:221px;height:17.5px"></div>
<svg style="left:23px;top:229px" width="10" height="6"><path d="M1 1l3.5 3 3.5-3" fill="none" stroke="#aaa" stroke-width="0.9"/></svg>
<div class="l" style="left:33.5px;top:225px">0.20mm Standard @BBL A1</div>
<svg style="left:0;top:220px" width="285" height="22">
 <path d="M252.5 6.5h6l2 2v6.5h-8z M254.5 15v-3h4v3 M254.5 6.5v2h3" fill="none" stroke="#555" stroke-width="1"/>
 <circle cx="271.5" cy="9.5" r="3.6" fill="none" stroke="#555" stroke-width="1.1"/><path d="M274 12l3 3" stroke="#555" stroke-width="1.3"/>
</svg>
<!-- tabs -->
<div class="l" style="left:10.5px;top:252px;font-weight:bold;color:#222;font-size:10.2px">Quality</div>
<div class="l" style="left:67px;top:252px;color:#7a7a7a;font-size:10.9px">Strength</div>
<div class="l" style="left:130px;top:252px;color:#7a7a7a;font-size:10.9px">Support</div>
<div class="l" style="left:190px;top:252px;color:#7a7a7a;font-size:10.9px">Others</div>
<div class="a" style="left:9px;top:265px;width:39px;height:2.2px;border-radius:1px;background:#00ae42"></div>
<div class="a" style="left:0;top:267.5px;width:285px;height:1px;background:#d8d8d8"></div>

<!-- settings -->
<svg style="left:0;top:270px" width="285" height="200">
 <g fill="#6d6d6d"><path d="M4 8.5q0-2 2-2h6q2 0 2 2v1h-10z"/><rect x="4" y="10.3" width="10" height="1.6"/><rect x="4" y="12.6" width="10" height="1.6"/><path d="M4 14.9h10v0.6q0 1.2-1.5 1.2h-7q-1.5 0-1.5-1.2z"/></g>
 <path d="M82 11.5h200" stroke="#ececec" stroke-width="1"/>
 <rect x="4.5" y="71.5" width="10" height="10" fill="none" stroke="#777" stroke-width="1"/><path d="M6 80c1-4 3-6.5 7.5-7.5" fill="none" stroke="#999" stroke-width="1"/>
 <path d="M48 76.5h234" stroke="#ececec" stroke-width="1"/>
 <g fill="none" stroke="#666" stroke-width="1"><path d="M8.5 116l3.2 1.8v3.7l-3.2 1.8-3.2-1.8v-3.7z"/><circle cx="8.5" cy="119.7" r="1.2"/><circle cx="12.5" cy="124" r="2.3"/></g>
 <path d="M70 121.5h212" stroke="#ececec" stroke-width="1"/>
</svg>
<div class="l" style="left:18px;top:274px;font-weight:bold;color:#222">Layer height</div>
<div class="l" style="left:17px;top:296px;color:#3a3a3a;font-size:10.8px">Layer height</div>
<div class="box" style="left:166px;top:294.5px;width:81px;height:17px"></div>
<div class="l" style="left:171px;top:296px;color:#333">0.2</div>
<div class="l" style="left:227px;top:298px;font-size:7.5px;color:#777">mm</div>
<div class="l" style="left:17px;top:316px;color:#3a3a3a;font-size:10.8px">Initial layer height</div>
<div class="box" style="left:166px;top:315px;width:81px;height:17px"></div>
<div class="l" style="left:171px;top:316px;color:#333">0.2</div>
<div class="l" style="left:227px;top:318px;font-size:7.5px;color:#777">mm</div>
<div class="l" style="left:18px;top:339px;font-weight:bold;color:#222">Seam</div>
<div class="l" style="left:17px;top:361px;color:#3a3a3a;font-size:10.8px">Seam position</div>
<div class="box" style="left:166px;top:359.5px;width:81px;height:17px"></div>
<svg style="left:170px;top:366px" width="10" height="6"><path d="M1 1l3 2.5 3-2.5" fill="none" stroke="#aaa" stroke-width="0.9"/></svg>
<div class="l" style="left:180px;top:361px;color:#333">Aligned</div>
<div class="l" style="left:19px;top:384px;font-weight:bold;color:#222">Advanced</div>
<div class="l" style="left:17px;top:406px;color:#3a3a3a;font-size:10.8px">Only one wall on top</div>
<div class="l" style="left:17px;top:418px;color:#3a3a3a;font-size:10.8px">surfaces</div>
<div class="box" style="left:166px;top:410.5px;width:81px;height:17px"></div>
<svg style="left:170px;top:417px" width="10" height="6"><path d="M1 1l3 2.5 3-2.5" fill="none" stroke="#aaa" stroke-width="0.9"/></svg>
<div class="l" style="left:180px;top:412px;color:#333">Top surfaces</div>
<div class="l" style="left:17px;top:438px;color:#3a3a3a;font-size:10.8px">Only one wall on first layer</div>
<div class="box" style="left:166px;top:439px;width:12px;height:12px;border-color:#bbb"></div>
</body></html>
